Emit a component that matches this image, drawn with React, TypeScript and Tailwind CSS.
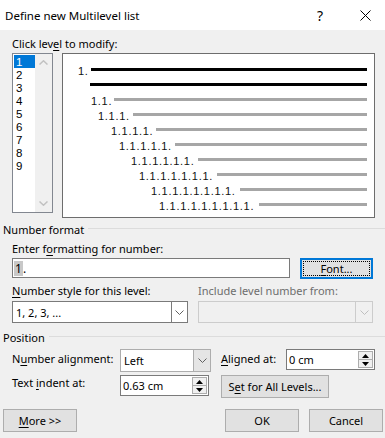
import React from 'react';

const U = ({ children }: { children: React.ReactNode }) => (
  <span className="underline underline-offset-[2px] decoration-1">{children}</span>
);

const Chevron = ({ color = '#606060' }: { color?: string }) => (
  <svg width="9" height="5" viewBox="0 0 9 5">
    <path d="M0.5 0.5 L4.5 4.5 L8.5 0.5" fill="none" stroke={color} strokeWidth="1" />
  </svg>
);

const Spinner = () => (
  <div className="flex flex-col w-[15px] h-[17px] border border-[#adadad] bg-[#f0f0f0] mr-[1px]">
    <div className="flex-1 flex items-center justify-center border-b border-[#adadad]">
      <svg width="7" height="4" viewBox="0 0 7 4"><path d="M0 4 L3.5 0 L7 4 Z" fill="#000" /></svg>
    </div>
    <div className="flex-1 flex items-center justify-center">
      <svg width="7" height="4" viewBox="0 0 7 4"><path d="M0 0 L3.5 4 L7 0 Z" fill="#000" /></svg>
    </div>
  </div>
);

const levels = [
  { pl: 16, w: 13, text: '1.', dark: true },
  { pl: 28, w: 0, text: '', dark: true },
  { pl: 29, w: 23, text: '1.1.', dark: false },
  { pl: 36, w: 35, text: '1.1.1.', dark: false },
  { pl: 49, w: 45, text: '1.1.1.1.', dark: false },
  { pl: 57, w: 56, text: '1.1.1.1.1.', dark: false },
  { pl: 69, w: 67, text: '1.1.1.1.1.1.', dark: false },
  { pl: 77, w: 78, text: '1.1.1.1.1.1.1.', dark: false },
  { pl: 89, w: 89, text: '1.1.1.1.1.1.1.1.', dark: false },
  { pl: 97, w: 100, text: '1.1.1.1.1.1.1.1.1.', dark: false },
];

const GroupHeader = ({ label }: { label: string }) => (
  <div className="flex items-center pl-[3px]">
    <span>{label}</span>
    <div className="flex-1 h-px bg-[#dcdcdc] ml-[4px] mt-[-2px]" />
  </div>
);

const Button = ({ children, className = '' }: { children: React.ReactNode; className?: string }) => (
  <div className={`h-[23px] flex items-center justify-center bg-[#e1e1e1] border border-[#adadad] ${className}`}>
    {children}
  </div>
);

export default function App() {
  return (
    <div className="w-[385px] h-[438px] overflow-hidden bg-[#f0f0f0] font-['Noto_Sans',sans-serif] text-[11px] leading-[15px] text-black">
      <div className="h-[30px] bg-white flex items-center pl-[5px]">
        <span className="text-[11.5px]">Define new Multilevel list</span>
        <span className="ml-auto mr-[37px] text-[14px]">?</span>
        <svg className="mr-[14px]" width="11" height="11" viewBox="0 0 11 11">
          <path d="M0.5 0.5 L10.5 10.5 M10.5 0.5 L0.5 10.5" stroke="#000" strokeWidth="1" />
        </svg>
      </div>

      <div className="pt-[6px]">
        <div className="pl-[12px]">
          Click lev<U>e</U>l to modify:
        </div>
        <div className="mt-[2px] pl-[12px] flex items-start gap-[9px]">
          <div className="w-[41px] h-[160px] bg-white border border-[#828790] flex">
            <div className="flex-1 pt-[1px] pl-[1px] font-['Liberation_Sans',sans-serif] text-[11.5px]">
              {[1, 2, 3, 4, 5, 6, 7, 8, 9].map((n) => (
                <div
                  key={n}
                  className={`h-[13px] pl-[2px] flex items-center overflow-hidden ${n === 1 ? 'bg-[#0078d7] text-white' : ''}`}
                >
                  <span className="leading-[12px]">{n}</span>
                </div>
              ))}
            </div>
            <div className="w-[17px] bg-[#f0f0f0] flex flex-col items-center justify-between py-[6px]">
              <svg width="9" height="5" viewBox="0 0 9 5">
                <path d="M0.5 4.5 L4.5 0.8 L8.5 4.5" fill="none" stroke="#c1c1c1" strokeWidth="1.5" />
              </svg>
              <svg width="9" height="5" viewBox="0 0 9 5">
                <path d="M0.5 0.5 L4.5 4.2 L8.5 0.5" fill="none" stroke="#c1c1c1" strokeWidth="1.5" />
              </svg>
            </div>
          </div>

          <div className="w-[313px] h-[165px] bg-white border border-[#6d6d6d] pt-[8px] pr-[7px]">
            {levels.map((l, i) => (
              <div key={i} className="h-[15px] flex items-center" style={{ paddingLeft: l.pl - 1 }}>
                {l.w > 0 && (
                  <span
                    className="shrink-0 font-['Liberation_Sans',sans-serif] text-[11px] tracking-[0.7px] leading-[11px] mt-[3px] whitespace-nowrap text-[#111]"
                    style={{ width: l.w }}
                  >
                    {l.text}
                  </span>
                )}
                <div className={`flex-1 h-[3px] ${l.dark ? 'bg-black' : 'bg-[#a6a6a6]'}`} />
              </div>
            ))}
          </div>
        </div>

        <div className="mt-[4px]">
          <GroupHeader label="Number format" />
        </div>
        <div className="pl-[12px] mt-[4px]">
          Enter f<U>o</U>rmatting for number:
        </div>
        <div className="pl-[12px] mt-[2px] flex items-start">
          <div className="w-[278px] h-[20px] bg-white border border-[#7a7a7a] flex items-center pl-[1px] text-[12px]">
            <span className="bg-[#c8c8c8] px-[1px]">1</span>
            <span>.</span>
          </div>
          <div className="ml-[10px] w-[73px] h-[21px] border-2 border-[#0078d7] bg-[#e1e1e1] p-[1px]">
            <div className="w-full h-full border border-dotted border-black flex items-center justify-center leading-[13px]">
              <U>F</U>ont...
            </div>
          </div>
        </div>

        <div className="pl-[12px] mt-[4px] flex">
          <div className="w-[186px]">
            <U>N</U>umber style for this level:
          </div>
          <div className="text-[#6d6d6d]">Include level number from:</div>
        </div>
        <div className="pl-[12px] mt-[3px] flex">
          <div className="w-[176px] h-[22px] bg-white border border-[#7a7a7a] flex items-center">
            <span className="flex-1 pl-[3px]">1, 2, 3, ...</span>
            <div className="w-[16px] h-full border-l border-[#7a7a7a] flex items-center justify-center">
              <Chevron />
            </div>
          </div>
          <div className="ml-[10px] w-[175px] h-[22px] bg-[#f0f0f0] border border-[#cccccc] flex items-center justify-end">
            <div className="w-[17px] h-full border-l border-[#cccccc] flex items-center justify-center">
              <Chevron color="#bfbfbf" />
            </div>
          </div>
        </div>

        <div className="mt-[7px]">
          <GroupHeader label="Position" />
        </div>
        <div className="pl-[12px] mt-[4px] flex items-start">
          <div className="w-[108px] pt-[2px]">
            N<U>u</U>mber alignment:
          </div>
          <div className="w-[91px] h-[23px] bg-white border border-[#adadad] flex items-center">
            <span className="flex-1 pl-[3px]">Left</span>
            <div className="w-[17px] h-full bg-[#e5e5e5] border-l border-[#adadad] flex items-center justify-center">
              <Chevron />
            </div>
          </div>
          <div className="ml-[10px] w-[65px] pt-[2px]">
            <U>A</U>ligned at:
          </div>
          <div className="w-[89px] h-[21px] bg-white border border-[#7a7a7a] flex items-center">
            <span className="flex-1 pl-[2px]">0 cm</span>
            <Spinner />
          </div>
        </div>
        <div className="pl-[12px] mt-[3px] flex items-start">
          <div className="w-[108px]">
            Text <U>i</U>ndent at:
          </div>
          <div className="w-[89px] h-[21px] bg-white border border-[#7a7a7a] flex items-center">
            <span className="flex-1 pl-[2px]">0.63 cm</span>
            <Spinner />
          </div>
          <Button className="ml-[12px] w-[108px]">
            S<U>e</U>t for All Levels...
          </Button>
        </div>

        <div className="pl-[3px] pr-[2px] mt-[11px] flex">
          <Button className="w-[74px]">
            <U>M</U>ore &gt;&gt;
          </Button>
          <Button className="ml-auto w-[74px]">OK</Button>
          <Button className="ml-[10px] w-[74px]">Cancel</Button>
        </div>
      </div>
    </div>
  );
}
